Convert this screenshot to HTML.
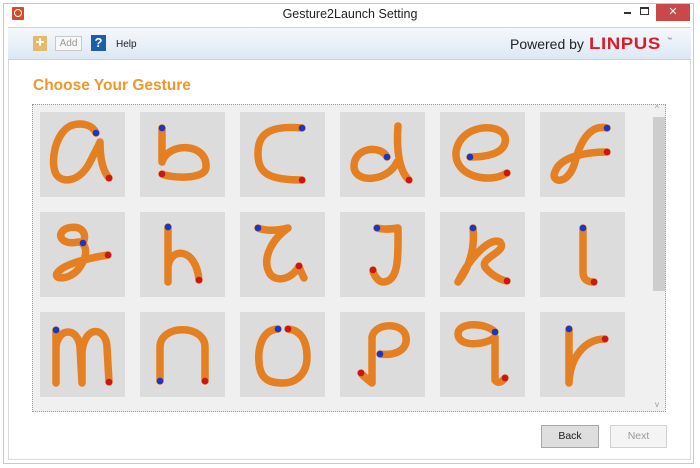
<!DOCTYPE html>
<html><head><meta charset="utf-8"><style>
*{margin:0;padding:0;box-sizing:border-box}
body{width:700px;height:468px;background:#fff;position:relative;overflow:hidden;font-family:"Liberation Sans",sans-serif}
.abs{position:absolute}
</style></head><body>
<div class="abs" style="left:3px;top:3px;width:691px;height:461px;border:1px solid #c8c8c8"></div>
<div class="abs" style="left:8px;top:27px;width:683px;height:433px;border:1px solid #dadada;border-top:none"></div>
<div class="abs" style="left:12px;top:7px;width:12px;height:13px;background:#d24a2a;border-radius:1px"></div>
<div class="abs" style="left:14px;top:9px;width:8px;height:8px;border:1.5px solid #fff;border-radius:50%"></div>
<div class="abs" style="left:0;top:7px;width:700px;text-align:center;font-size:12.5px;color:#222">Gesture2Launch Setting</div>
<div class="abs" style="left:624px;top:12px;width:7px;height:2px;background:#333"></div>
<div class="abs" style="left:640px;top:7px;width:9px;height:8px;border:1px solid #333;border-top-width:2px"></div>
<div class="abs" style="left:656px;top:4px;width:34px;height:17px;background:#c9484a;color:#fff;font-size:11px;text-align:center;line-height:17px">✕</div>
<div class="abs" style="left:8px;top:27px;width:683px;height:33px;background:linear-gradient(#f5f8fc,#dde8f4);border-bottom:1px solid #c5d2e0;border-top:1px solid #c9d4df"></div>
<div class="abs" style="left:33px;top:36px;width:14px;height:15px;background:#e7b96a;color:#fff;font-size:16px;line-height:14px;text-align:center;font-weight:bold">+</div>
<div class="abs" style="left:55px;top:36px;width:27px;height:15px;background:#f8f8f8;border:1px solid #c8c8c8;color:#999;font-size:10px;line-height:13px;text-align:center">Add</div>
<div class="abs" style="left:91px;top:35px;width:15px;height:16px;background:#1a5fa8;color:#fff;font-size:13px;line-height:16px;text-align:center;font-weight:bold">?</div>
<div class="abs" style="left:116px;top:39px;font-size:10px;color:#222">Help</div>
<div class="abs" style="left:510px;top:36px;font-size:14px;color:#222">Powered by</div>
<div class="abs" style="left:589px;top:34px;font-size:17px;color:#d61f2c;font-weight:bold;letter-spacing:0.5px;transform:scaleX(1.1);transform-origin:left">LINPUS</div>
<div class="abs" style="left:667px;top:37px;font-size:5px;color:#555">™</div>
<div class="abs" style="left:33px;top:77px;font-size:15.5px;font-weight:bold;color:#ef972c">Choose Your Gesture</div>
<div class="abs" style="left:32px;top:104px;width:634px;height:308px;background:#f0f0f0;border:1px dotted #999"></div>
<div class="abs" style="left:653px;top:117px;width:12px;height:174px;background:#cdcdcd"></div>
<div class="abs" style="left:655px;top:104px;font-size:8px;color:#999">^</div>
<div class="abs" style="left:655px;top:400px;font-size:8px;color:#999">v</div>
<div class="abs" style="left:33px;top:105px;width:619px;height:306px;overflow:hidden">
<svg width="619" height="306" style="position:absolute;left:0;top:0">
<defs><style>.s{fill:none;stroke:#e47f22;stroke-width:7.5;stroke-linecap:round;stroke-linejoin:round}.b{fill:#1d35c0}.r{fill:#cc1515}</style></defs>
<g fill="#dcdcdc">
<rect x="7" y="7" width="85" height="85"/><rect x="107" y="7" width="85" height="85"/><rect x="207" y="7" width="85" height="85"/><rect x="307" y="7" width="85" height="85"/><rect x="407" y="7" width="85" height="85"/><rect x="507" y="7" width="85" height="85"/>
<rect x="7" y="107" width="85" height="85"/><rect x="107" y="107" width="85" height="85"/><rect x="207" y="107" width="85" height="85"/><rect x="307" y="107" width="85" height="85"/><rect x="407" y="107" width="85" height="85"/><rect x="507" y="107" width="85" height="85"/>
<rect x="7" y="207" width="85" height="85"/><rect x="107" y="207" width="85" height="85"/><rect x="207" y="207" width="85" height="85"/><rect x="307" y="207" width="85" height="85"/><rect x="407" y="207" width="85" height="85"/><rect x="507" y="207" width="85" height="85"/>
</g>
<g transform="translate(7,7)"><path class="s" d="M56 21 C52 12 40 10 30 14 C15 22 10 50 16 62 C22 72 40 70 50 50 C55 40 58 35 60 30 C60 45 62 58 69 66"/><circle class="b" cx="56" cy="21" r="3.3"/><circle class="r" cx="69" cy="66" r="3.3"/></g>
<g transform="translate(107,7)"><path class="s" d="M22 16 L22 50 C28 30 68 30 66 56 C64 68 30 66 22 62"/><circle class="b" cx="22" cy="16" r="3.3"/><circle class="r" cx="22" cy="62" r="3.3"/></g>
<g transform="translate(207,7)"><path class="s" d="M62 16 C20 12 18 30 18 42 C18 62 30 68 62 68"/><circle class="b" cx="62" cy="16" r="3.3"/><circle class="r" cx="62" cy="68" r="3.3"/></g>
<g transform="translate(307,7)"><path class="s" d="M47 45 C40 32 14 36 14 54 C14 72 48 70 57 50 M58 14 C56 40 60 60 69 68"/><circle class="b" cx="47" cy="45" r="3.3"/><circle class="r" cx="69" cy="68" r="3.3"/></g>
<g transform="translate(407,7)"><path class="s" d="M30 45 C50 45 68 40 65 25 C60 10 20 12 16 40 C14 65 50 72 67 61"/><circle class="b" cx="30" cy="45" r="3.3"/><circle class="r" cx="67" cy="61" r="3.3"/></g>
<g transform="translate(507,7)"><path class="s" d="M67 16 C50 12 40 30 35 50 C28 75 10 70 15 60 C20 45 45 40 67 40"/><circle class="b" cx="67" cy="16" r="3.3"/><circle class="r" cx="67" cy="40" r="3.3"/></g>
<g transform="translate(7,107)"><path class="s" d="M43 31 C48 20 40 13 28 16 C15 20 20 34 38 30 C45 30 50 40 40 55 C30 70 8 68 20 58 C30 50 55 45 68 43"/><circle class="b" cx="43" cy="31" r="3.3"/><circle class="r" cx="68" cy="43" r="3.3"/></g>
<g transform="translate(107,107)"><path class="s" d="M28 15 L28 70 L28 55 C30 35 56 35 59 68"/><circle class="b" cx="28" cy="15" r="3.3"/><circle class="r" cx="59" cy="68" r="3.3"/></g>
<g transform="translate(207,107)"><path class="s" d="M18 16 C28 20 40 18 48 16 C35 25 20 45 30 62 C38 72 54 65 59 54 C60 58 62 62 64 66"/><circle class="b" cx="18" cy="16" r="3.3"/><circle class="r" cx="59" cy="54" r="3.3"/></g>
<g transform="translate(307,107)"><path class="s" d="M37 16 C45 18 52 17 58 16 C58 40 60 70 43 70 C38 70 33 62 33 58"/><circle class="b" cx="37" cy="16" r="3.3"/><circle class="r" cx="33" cy="58" r="3.3"/></g>
<g transform="translate(407,107)"><path class="s" d="M33 16 C35 35 30 55 18 70 C30 45 50 25 60 30 C68 40 40 45 45 55 C50 62 60 68 67 69"/><circle class="b" cx="33" cy="16" r="3.3"/><circle class="r" cx="67" cy="69" r="3.3"/></g>
<g transform="translate(507,107)"><path class="s" d="M43 16 L43 60 C43 68 48 70 54 70"/><circle class="b" cx="43" cy="16" r="3.3"/><circle class="r" cx="54" cy="70" r="3.3"/></g>
<g transform="translate(7,207)"><path class="s" d="M16 18 L16 71 L16 35 C18 15 38 15 40 35 L42 71 L42 40 C45 12 66 15 67 35 L69 70"/><circle class="b" cx="16" cy="18" r="3.3"/><circle class="r" cx="69" cy="70" r="3.3"/></g>
<g transform="translate(107,207)"><path class="s" d="M20 69 L20 35 C20 12 65 12 65 35 L65 69"/><circle class="b" cx="20" cy="69" r="3.3"/><circle class="r" cx="65" cy="69" r="3.3"/></g>
<g transform="translate(207,207)"><path class="s" d="M38 17 C20 18 18 40 19 50 C20 68 30 71 43 71 C56 71 67 62 67 45 C67 28 60 18 48 17"/><circle class="b" cx="38" cy="17" r="3.3"/><circle class="r" cx="48" cy="17" r="3.3"/></g>
<g transform="translate(307,207)"><path class="s" d="M40 42 C55 44 68 38 66 25 C64 10 35 10 32 25 L32 71 C28 68 24 65 21 61"/><circle class="b" cx="40" cy="42" r="3.3"/><circle class="r" cx="21" cy="61" r="3.3"/></g>
<g transform="translate(407,207)"><path class="s" d="M55 20 C45 10 18 10 18 22 C18 35 45 34 55 25 L55 68 C58 72 62 70 65 66"/><circle class="b" cx="55" cy="20" r="3.3"/><circle class="r" cx="65" cy="66" r="3.3"/></g>
<g transform="translate(507,207)"><path class="s" d="M29 17 L29 71 C30 45 45 27 65 27"/><circle class="b" cx="29" cy="17" r="3.3"/><circle class="r" cx="65" cy="27" r="3.3"/></g>
</svg>
</div>
<div class="abs" style="left:541px;top:425px;width:58px;height:23px;background:#dedede;border:1px solid #a8a8a8;font-size:10.5px;color:#222;text-align:center;line-height:21px">Back</div>
<div class="abs" style="left:610px;top:425px;width:57px;height:23px;background:#f4f4f4;border:1px solid #d2d2d2;font-size:10.5px;color:#999;text-align:center;line-height:21px">Next</div>
</body></html>
